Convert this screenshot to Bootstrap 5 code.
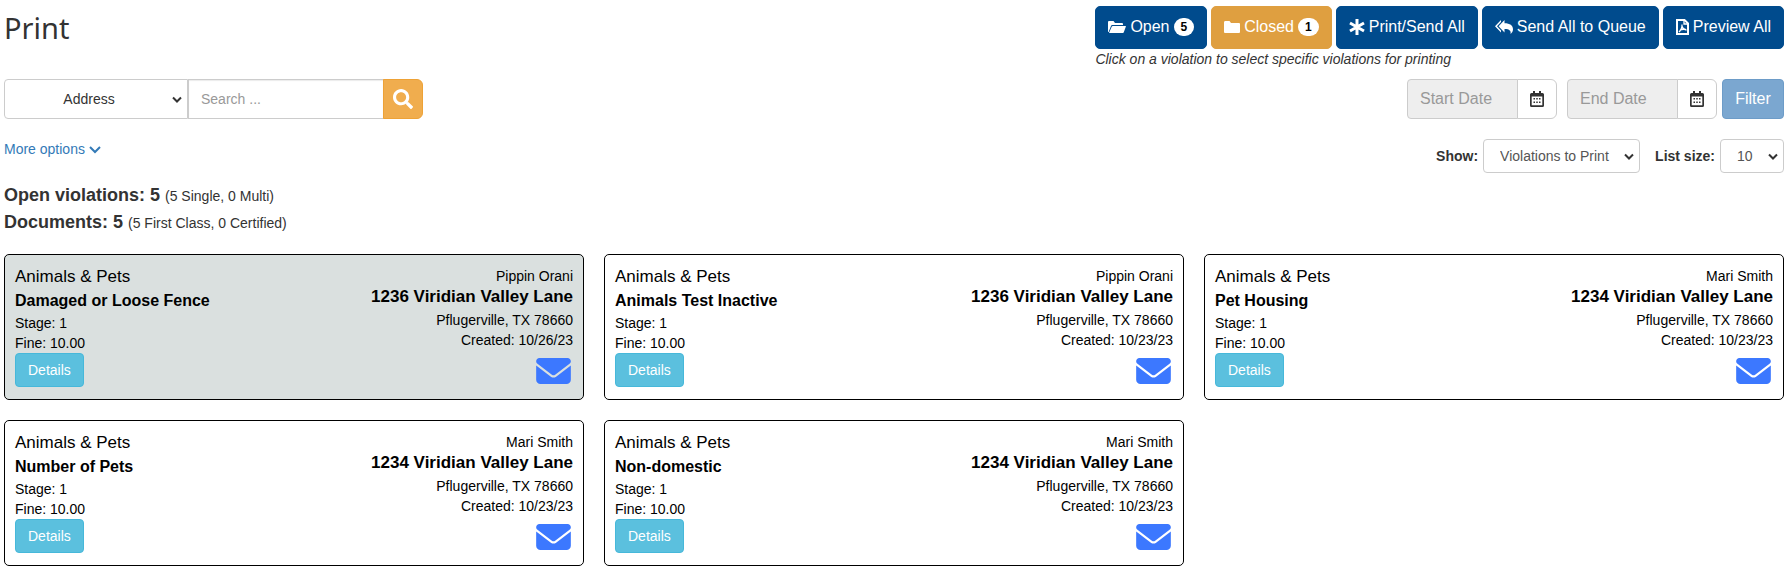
<!DOCTYPE html>
<html lang="en">
<head>
<meta charset="utf-8">
<meta name="viewport" content="width=device-width, initial-scale=1">
<title>Print</title>
<link href="https://cdn.jsdelivr.net/npm/bootstrap@5.3.0/dist/css/bootstrap.min.css" rel="stylesheet">
<style>
  body { font-family: "Liberation Sans", Arial, sans-serif; font-size: 14px; line-height: 20px; color: #333; background: #fff; }
  .page { padding: 6px 2px 0 4px; }
  .icon { width: 16px; height: 16px; fill: currentColor; flex: none; }
  .icon-wide { width: 18px; }
  .icon-narrow { width: 13px; }
  .icon-large { width: 20px; height: 20px; }
  h1 { font-family: "Noto Sans", sans-serif; font-size: 29px; line-height: 44px; font-weight: 400; }
  .btn-top { --bs-btn-color: #fff; --bs-btn-hover-color: #fff; --bs-btn-bg: #004b8d; --bs-btn-hover-bg: #003d73; --bs-btn-border-color: #004b8d; height: 43px; padding: 0 12px 2px; font-size: 16px; border-radius: 5px; gap: 4px; }
  .btn-closed { --bs-btn-bg: #df9f40; --bs-btn-border-color: #df9f40; --bs-btn-hover-bg: #c98b2f; }
  .count { background: #fff; color: #000; font-size: 12px; line-height: 18px; border-radius: 10px; padding: 0 7px; font-weight: 700; }
  .form-control, .form-select { font-size: 14px; border: 1px solid #ccc; border-radius: 4px; color: #333; }
  .form-control::placeholder { color: #999; }
  .form-select { background-image: url("data:image/svg+xml,%3Csvg xmlns='http://www.w3.org/2000/svg' viewBox='0 0 10 7'%3E%3Cpath fill='none' stroke='%23333' stroke-width='2' d='M1 1.5l4 4 4-4'/%3E%3C/svg%3E"); background-size: 10px 7px; background-position: right 5px center; }
  .control-row { padding-top: 10px; }
  .search-box { width: 419px; height: 40px; }
  .search-box .form-select { flex: 0 0 184px; padding: 0 16px 0 2px; text-align: center; }
  .search-box .form-control { padding: 0 12px; margin-left: 0 !important; box-shadow: inset 0 1px 1px rgba(0,0,0,.08); }
  .btn-search { width: 40px; padding: 0; border: 1px solid #eea236; background: #f0ad4e; color: #fff; }
  .date-box { width: 150px; height: 40px; }
  .date-box .form-control { background: #eee; font-size: 16px; padding: 0 12px; }
  .date-box .btn { width: 40px; padding: 0 0 2px; border: 1px solid #ccc; color: #333; background: #fff; }
  .dates { gap: 10px; margin-right: 5px; }
  .btn-filter, .btn-filter:disabled { height: 40px; width: 62px; padding: 0; font-size: 16px; color: #fff; background: #7ba7d0; border: 1px solid #6d9cc8; border-radius: 4px; opacity: 1; }
  .list-options { padding: 20px 0 9px; }
  .list-options .form-select { height: 34px; padding: 0 28px 0 16px; color: #555; }
  .list-options label { font-weight: 700; margin-right: 5px; }
  .show-select { width: 157px; margin-right: 15px; }
  .size-select { width: 64px; }
  .more { color: #337ab7; text-decoration: none; }
  .more .icon { width: 12px; height: 8px; }
  .totals { font-size: 18px; line-height: 26px; font-weight: 700; margin-bottom: 18px; }
  .totals span { font-size: 14px; font-weight: 400; }
  .violations { gap: 20px; display: grid; grid-template-columns: repeat(auto-fit, minmax(500px, 1fr)); }
  .violation { border: 1px solid #000; border-radius: 5px; color: #000; padding: 11px 10px 12px; }
  .violation.selected { background: #dae0df; }
  .category { font-size: 17px; line-height: 22px; }
  .rule { font-size: 16px; line-height: 25px; font-weight: 700; }
  .street { font-size: 17px; line-height: 22px; padding-bottom: 2px; font-weight: 700; }
  .btn-details { height: 34px; padding: 0 12px; font-size: 14px; color: #fff; background: #5bc0de; border: 1px solid #46b8da; border-radius: 4px; }
  .mail { display: block; width: 35px; height: 26px; fill: #3c78ff; margin: 8px 2px 0 auto; }
</style>
</head>
<body>
<svg class="d-none" xmlns="http://www.w3.org/2000/svg">
  <symbol id="i-open" viewBox="0 0 18 14"><path d="M0 12V2Q0 1 1 1h4.500l1.500 2h7q1 0 1 1v1H4.200Q3.400 5 3 6L.6 12z"/><path d="M4.700 6H17.500q.6 0 .4.600l-2.200 6q-.2.400-.8.400H1.500q-.6 0-.3-.600l2.600-5.800q.3-.6.900-.6z"/></symbol>
  <symbol id="i-folder" viewBox="0 0 16 14"><path d="M0 12V2.500Q0 1 1 1h4.500l1.500 2h8q1 0 1 1v8q0 1-1 1H1q-1 0-1-1z"/></symbol>
  <symbol id="i-asterisk" viewBox="0 0 16 16"><path fill="none" stroke="currentColor" stroke-width="3" d="M8 0v16M1 4l14 8M1 12l14-8"/></symbol>
  <symbol id="i-reply" viewBox="0 0 18 14"><path d="M9.500 0v3.300C15 3.300 18 5.500 18 9.300c0 2-1 3.700-2.500 4.700.8-3-.8-5-6-5v3.400L3.600 6.200zM6 0v2L2 6.200l4 4.200v2L0 6.200z"/></symbol>
  <symbol id="i-pdf" viewBox="0 0 13 16"><path fill="none" stroke="currentColor" stroke-width="2" d="M1 1h7.500L12 4.500V15H1z"/><path fill="none" stroke="currentColor" stroke-width="1.300" d="M8 1v4h4M6 5.500c.2 3-1 5.500-3 7.500M6 7.500c.6 2 2 3.200 4.500 3.500M4 11.200c1.500-.7 3.500-1 6-.6"/></symbol>
  <symbol id="i-search" viewBox="0 0 512 512"><path d="M505 442.700L405.300 343c-4.500-4.500-10.600-7-17-7H372c27.600-35.300 44-79.700 44-128C416 93.100 322.900 0 208 0S0 93.100 0 208s93.100 208 208 208c48.300 0 92.700-16.400 128-44v16.300c0 6.400 2.500 12.500 7 17l99.700 99.700c9.400 9.400 24.600 9.400 33.900 0l28.300-28.300c9.400-9.400 9.400-24.600.1-34zM208 336c-70.700 0-128-57.200-128-128 0-70.700 57.200-128 128-128 70.700 0 128 57.200 128 128 0 70.700-57.200 128-128 128z"/></symbol>
  <symbol id="i-calendar" viewBox="0 0 14 16"><path fill-rule="evenodd" d="M3 0h2v2h4V0h2v2h1.500Q14 2 14 3.500v11q0 1.500-1.500 1.500h-11Q0 16 0 14.500v-11Q0 2 1.500 2H3zM1.700 5.500v8.800h10.600V5.500z"/><path d="M3.500 7h1.500v1.500H3.500zm2.750 0h1.500v1.500h-1.500zm2.750 0h1.500v1.500H9zM3.500 10.500h1.500v1.500H3.500zm2.750 0h1.500v1.500h-1.500zm2.750 0h1.500v1.500H9z"/></symbol>
  <symbol id="i-down" viewBox="0 0 12 8"><path fill="none" stroke="currentColor" stroke-width="2" d="M1 1l5 5 5-5"/></symbol>
  <symbol id="i-mail" viewBox="0 64 512 384"><path d="M48 64C21.500 64 0 85.500 0 112c0 15.100 7.100 29.300 19.200 38.400L236.800 313.600c11.400 8.500 27 8.500 38.400 0L492.800 150.400c12.100-9.100 19.200-23.300 19.200-38.400c0-26.500-21.500-48-48-48H48zM0 176V384c0 35.300 28.700 64 64 64H448c35.300 0 64-28.700 64-64V176L294.400 339.200c-22.800 17.100-54 17.100-76.800 0L0 176z"/></symbol>
</svg>

<main class="page container-fluid">
  <header class="d-flex justify-content-between align-items-start flex-wrap">
    <h1 class="m-0">Print</h1>
    <div>
      <div class="d-flex flex-wrap gap-1">
        <button type="button" class="btn btn-top d-flex align-items-center"><svg class="icon icon-wide"><use href="#i-open"/></svg>Open <span class="count">5</span></button>
        <button type="button" class="btn btn-top btn-closed d-flex align-items-center"><svg class="icon"><use href="#i-folder"/></svg>Closed <span class="count">1</span></button>
        <button type="button" class="btn btn-top d-flex align-items-center"><svg class="icon"><use href="#i-asterisk"/></svg>Print/Send All</button>
        <button type="button" class="btn btn-top d-flex align-items-center"><svg class="icon icon-wide"><use href="#i-reply"/></svg>Send All to Queue</button>
        <button type="button" class="btn btn-top d-flex align-items-center"><svg class="icon icon-narrow"><use href="#i-pdf"/></svg>Preview All</button>
      </div>
      <em class="d-block">Click on a violation to select specific violations for printing</em>
    </div>
  </header>

  <div class="control-row d-flex justify-content-between flex-wrap">
    <div class="search-box input-group flex-nowrap">
      <select class="form-select" aria-label="Search by"><option>Address</option></select>
      <input type="text" class="form-control" placeholder="Search ..." aria-label="Search">
      <button type="button" class="btn btn-search d-flex align-items-center justify-content-center" aria-label="Search"><svg class="icon icon-large"><use href="#i-search"/></svg></button>
    </div>
    <div class="d-flex">
      <div class="dates d-flex">
        <div class="date-box input-group flex-nowrap">
          <input type="text" class="form-control" placeholder="Start Date" aria-label="Start Date" readonly>
          <button type="button" class="btn" aria-label="Pick start date"><svg class="icon"><use href="#i-calendar"/></svg></button>
        </div>
        <div class="date-box input-group flex-nowrap">
          <input type="text" class="form-control" placeholder="End Date" aria-label="End Date" readonly>
          <button type="button" class="btn" aria-label="Pick end date"><svg class="icon"><use href="#i-calendar"/></svg></button>
        </div>
      </div>
      <button type="button" class="btn btn-filter" disabled>Filter</button>
    </div>
  </div>

  <div class="list-options d-flex justify-content-between align-items-start flex-wrap">
    <a href="#" class="more">More options <svg class="icon"><use href="#i-down"/></svg></a>
    <div class="d-flex align-items-center">
      <label for="show">Show:</label>
      <select id="show" class="form-select show-select"><option>Violations to Print</option></select>
      <label for="size" class="text-nowrap">List size:</label>
      <select id="size" class="form-select size-select"><option>10</option></select>
    </div>
  </div>

  <div class="totals">
    <div>Open violations: 5 <span>(5 Single, 0 Multi)</span></div>
    <div>Documents: 5 <span>(5 First Class, 0 Certified)</span></div>
  </div>

  <section class="violations">
    <article class="violation selected d-flex justify-content-between">
      <div>
        <div class="category">Animals &amp; Pets</div>
        <div class="rule">Damaged or Loose Fence</div>
        <div>Stage: 1</div>
        <div>Fine: 10.00</div>
        <button type="button" class="btn btn-details">Details</button>
      </div>
      <div class="text-end">
        <div>Pippin Orani</div>
        <div class="street">1236 Viridian Valley Lane</div>
        <div>Pflugerville, TX 78660</div>
        <div>Created: 10/26/23</div>
        <svg class="mail"><use href="#i-mail"/></svg>
      </div>
    </article>
    <article class="violation d-flex justify-content-between">
      <div>
        <div class="category">Animals &amp; Pets</div>
        <div class="rule">Animals Test Inactive</div>
        <div>Stage: 1</div>
        <div>Fine: 10.00</div>
        <button type="button" class="btn btn-details">Details</button>
      </div>
      <div class="text-end">
        <div>Pippin Orani</div>
        <div class="street">1236 Viridian Valley Lane</div>
        <div>Pflugerville, TX 78660</div>
        <div>Created: 10/23/23</div>
        <svg class="mail"><use href="#i-mail"/></svg>
      </div>
    </article>
    <article class="violation d-flex justify-content-between">
      <div>
        <div class="category">Animals &amp; Pets</div>
        <div class="rule">Pet Housing</div>
        <div>Stage: 1</div>
        <div>Fine: 10.00</div>
        <button type="button" class="btn btn-details">Details</button>
      </div>
      <div class="text-end">
        <div>Mari Smith</div>
        <div class="street">1234 Viridian Valley Lane</div>
        <div>Pflugerville, TX 78660</div>
        <div>Created: 10/23/23</div>
        <svg class="mail"><use href="#i-mail"/></svg>
      </div>
    </article>
    <article class="violation d-flex justify-content-between">
      <div>
        <div class="category">Animals &amp; Pets</div>
        <div class="rule">Number of Pets</div>
        <div>Stage: 1</div>
        <div>Fine: 10.00</div>
        <button type="button" class="btn btn-details">Details</button>
      </div>
      <div class="text-end">
        <div>Mari Smith</div>
        <div class="street">1234 Viridian Valley Lane</div>
        <div>Pflugerville, TX 78660</div>
        <div>Created: 10/23/23</div>
        <svg class="mail"><use href="#i-mail"/></svg>
      </div>
    </article>
    <article class="violation d-flex justify-content-between">
      <div>
        <div class="category">Animals &amp; Pets</div>
        <div class="rule">Non-domestic</div>
        <div>Stage: 1</div>
        <div>Fine: 10.00</div>
        <button type="button" class="btn btn-details">Details</button>
      </div>
      <div class="text-end">
        <div>Mari Smith</div>
        <div class="street">1234 Viridian Valley Lane</div>
        <div>Pflugerville, TX 78660</div>
        <div>Created: 10/23/23</div>
        <svg class="mail"><use href="#i-mail"/></svg>
      </div>
    </article>
  </section>
</main>
<script src="https://cdn.jsdelivr.net/npm/bootstrap@5.3.0/dist/js/bootstrap.bundle.min.js"></script>
</body>
</html>
